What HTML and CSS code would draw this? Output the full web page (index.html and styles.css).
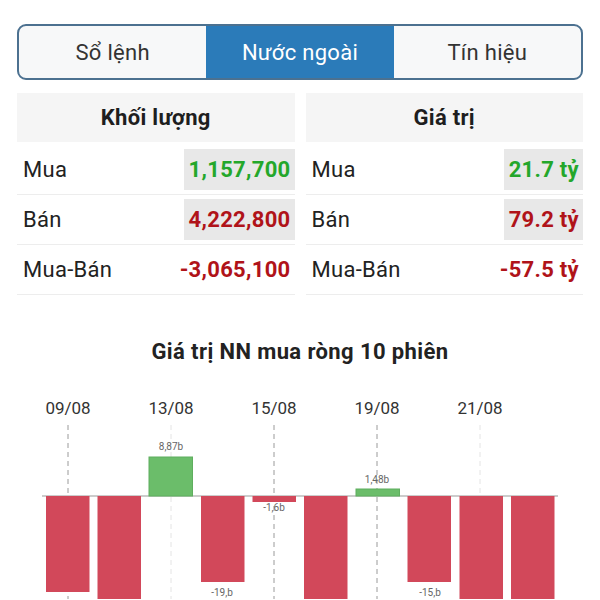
FILE: index.html
```html
<!DOCTYPE html>
<html lang="vi">
<head>
  <meta charset="UTF-8" />
  <meta name="viewport" content="width=device-width, initial-scale=1.0">
  <title>Nước ngoài</title>
  <link rel="stylesheet" href="styles.css">
</head>
<body>
  <div class="tabs">
    <div class="tab">Sổ lệnh</div>
    <div class="tab active">Nước ngoài</div>
    <div class="tab">Tín hiệu</div>
  </div>

  <div class="stats">
    <div class="col">
      <div class="head">Khối lượng</div>
      <div class="rows">
        <div class="row"><span class="label">Mua</span><span class="val box up">1,157,700</span></div>
        <div class="row"><span class="label">Bán</span><span class="val box down">4,222,800</span></div>
        <div class="row"><span class="label">Mua-Bán</span><span class="val down">-3,065,100</span></div>
      </div>
    </div>
    <div class="col">
      <div class="head">Giá trị</div>
      <div class="rows">
        <div class="row"><span class="label">Mua</span><span class="val box up">21.7 tỷ</span></div>
        <div class="row"><span class="label">Bán</span><span class="val box down">79.2 tỷ</span></div>
        <div class="row"><span class="label">Mua-Bán</span><span class="val down">-57.5 tỷ</span></div>
      </div>
    </div>
  </div>

  <h3 class="chart-title">Giá trị NN mua ròng 10 phiên</h3>

  <!-- biểu đồ 10 phiên -->
  <svg class="chart" width="600" height="210" viewBox="0 0 600 210">
    <g class="dates">
      <text x="68" y="25">09/08</text>
      <text x="171" y="25">13/08</text>
      <text x="274" y="25">15/08</text>
      <text x="377" y="25">19/08</text>
      <text x="480" y="25">21/08</text>
    </g>
    <g class="grid">
      <line x1="68" y1="36" x2="68" y2="210" />
      <line class="faint" x1="171" y1="36" x2="171" y2="210" />
      <line x1="274" y1="36" x2="274" y2="210" />
      <line x1="377" y1="36" x2="377" y2="210" />
      <line class="faint" x1="480" y1="36" x2="480" y2="210" />
    </g>
    <line class="zero" x1="42" y1="107" x2="558" y2="107" />
    <g class="bars">
      <rect class="neg" x="46" y="107" width="43.5" height="96" />
      <rect class="neg" x="97.5" y="107" width="43.5" height="120" />
      <rect class="pos" x="149" y="68" width="43.5" height="39" />
      <rect class="neg" x="201" y="107" width="43.5" height="86" />
      <rect class="neg" x="252.5" y="107" width="43.5" height="6" />
      <rect class="neg" x="304" y="107" width="43.5" height="120" />
      <rect class="pos" x="356" y="100" width="43.5" height="7" />
      <rect class="neg" x="407.5" y="107" width="43.5" height="86" />
      <rect class="neg" x="459.5" y="107" width="43.5" height="120" />
      <rect class="neg" x="511" y="107" width="43.5" height="120" />
    </g>
    <g class="values">
      <text x="171" y="61">8,87b</text>
      <text x="274" y="122">-1,6b</text>
      <text x="377" y="94">1,48b</text>
      <text x="222" y="207">-19,b</text>
      <text x="430" y="207">-15,b</text>
    </g>
  </svg>
</body>
</html>
```

FILE: styles.css
```css
body {
  margin: 0;
  padding: 0;
  font-family: Roboto, "Noto Sans", sans-serif;
  background: #ffffff;
  color: #222;
}

/* onglets */
.tabs {
  display: flex;
  margin: 24px 17px 0;
  height: 52px;
  border: 2px solid #4c7190;
  border-radius: 9px;
  overflow: hidden;
  background-color: #f7f8f9;
}

.tab {
  flex: 1;
  display: flex;
  justify-content: center;
  align-items: center;
  font-size: 22px;
  letter-spacing: 0.3px;
  color: #333;
}

.tab.active {
  background-color: #2b7bb9;
  color: #fff;
}

/* bảng khối lượng / giá trị */
.stats {
  display: grid;
  grid-template-columns: 1fr 1fr;
  column-gap: 11px;
  margin: 13px 17px 0;
}

.head {
  height: 49px;
  line-height: 49px;
  text-align: center;
  background-color: #f5f5f5;
  font-size: 22px;
  letter-spacing: 0.3px;
  font-weight: bold;
  color: #1e1e1e;
}

.rows {
  margin-top: 3px;
}

.row {
  display: flex;
  justify-content: space-between;
  align-items: center;
  height: 49px;
  border-bottom: 1px solid #ededed;
}

.label {
  padding-left: 6px;
  font-size: 22px;
  letter-spacing: 0.3px;
  color: #222;
}

.val {
  height: 41px;
  line-height: 41px;
  padding: 0 4px 0 5px;
  font-size: 22px;
  letter-spacing: 0.3px;
  font-weight: bold;
}

.val.box {
  background-color: #e8e8e8;
}

.up {
  color: #24a72b;
}

.down {
  color: #b01319;
}

/* biểu đồ */
.chart-title {
  margin: 45px 0 0;
  height: 24px;
  line-height: 24px;
  text-align: center;
  font-size: 22px;
  letter-spacing: 0.4px;
  font-weight: bold;
  color: #222;
}

.chart {
  display: block;
  margin-top: 25px;
}

.dates text {
  font-family: Roboto, sans-serif;
  font-size: 17px;
  fill: #333;
  text-anchor: middle;
}

.grid line {
  stroke: #9a9a9a;
  stroke-width: 1;
  stroke-dasharray: 5 4;
}

.grid line.faint {
  stroke: #e4e4e4;
}

.zero {
  stroke: #999;
  stroke-width: 1;
}

.neg {
  fill: #d2485a;
}

.pos {
  fill: #6bbd6a;
  stroke: #5fae5e;
  stroke-width: 1;
}

.values text {
  font-family: Roboto, sans-serif;
  font-size: 10px;
  fill: #666;
  text-anchor: middle;
}
```
